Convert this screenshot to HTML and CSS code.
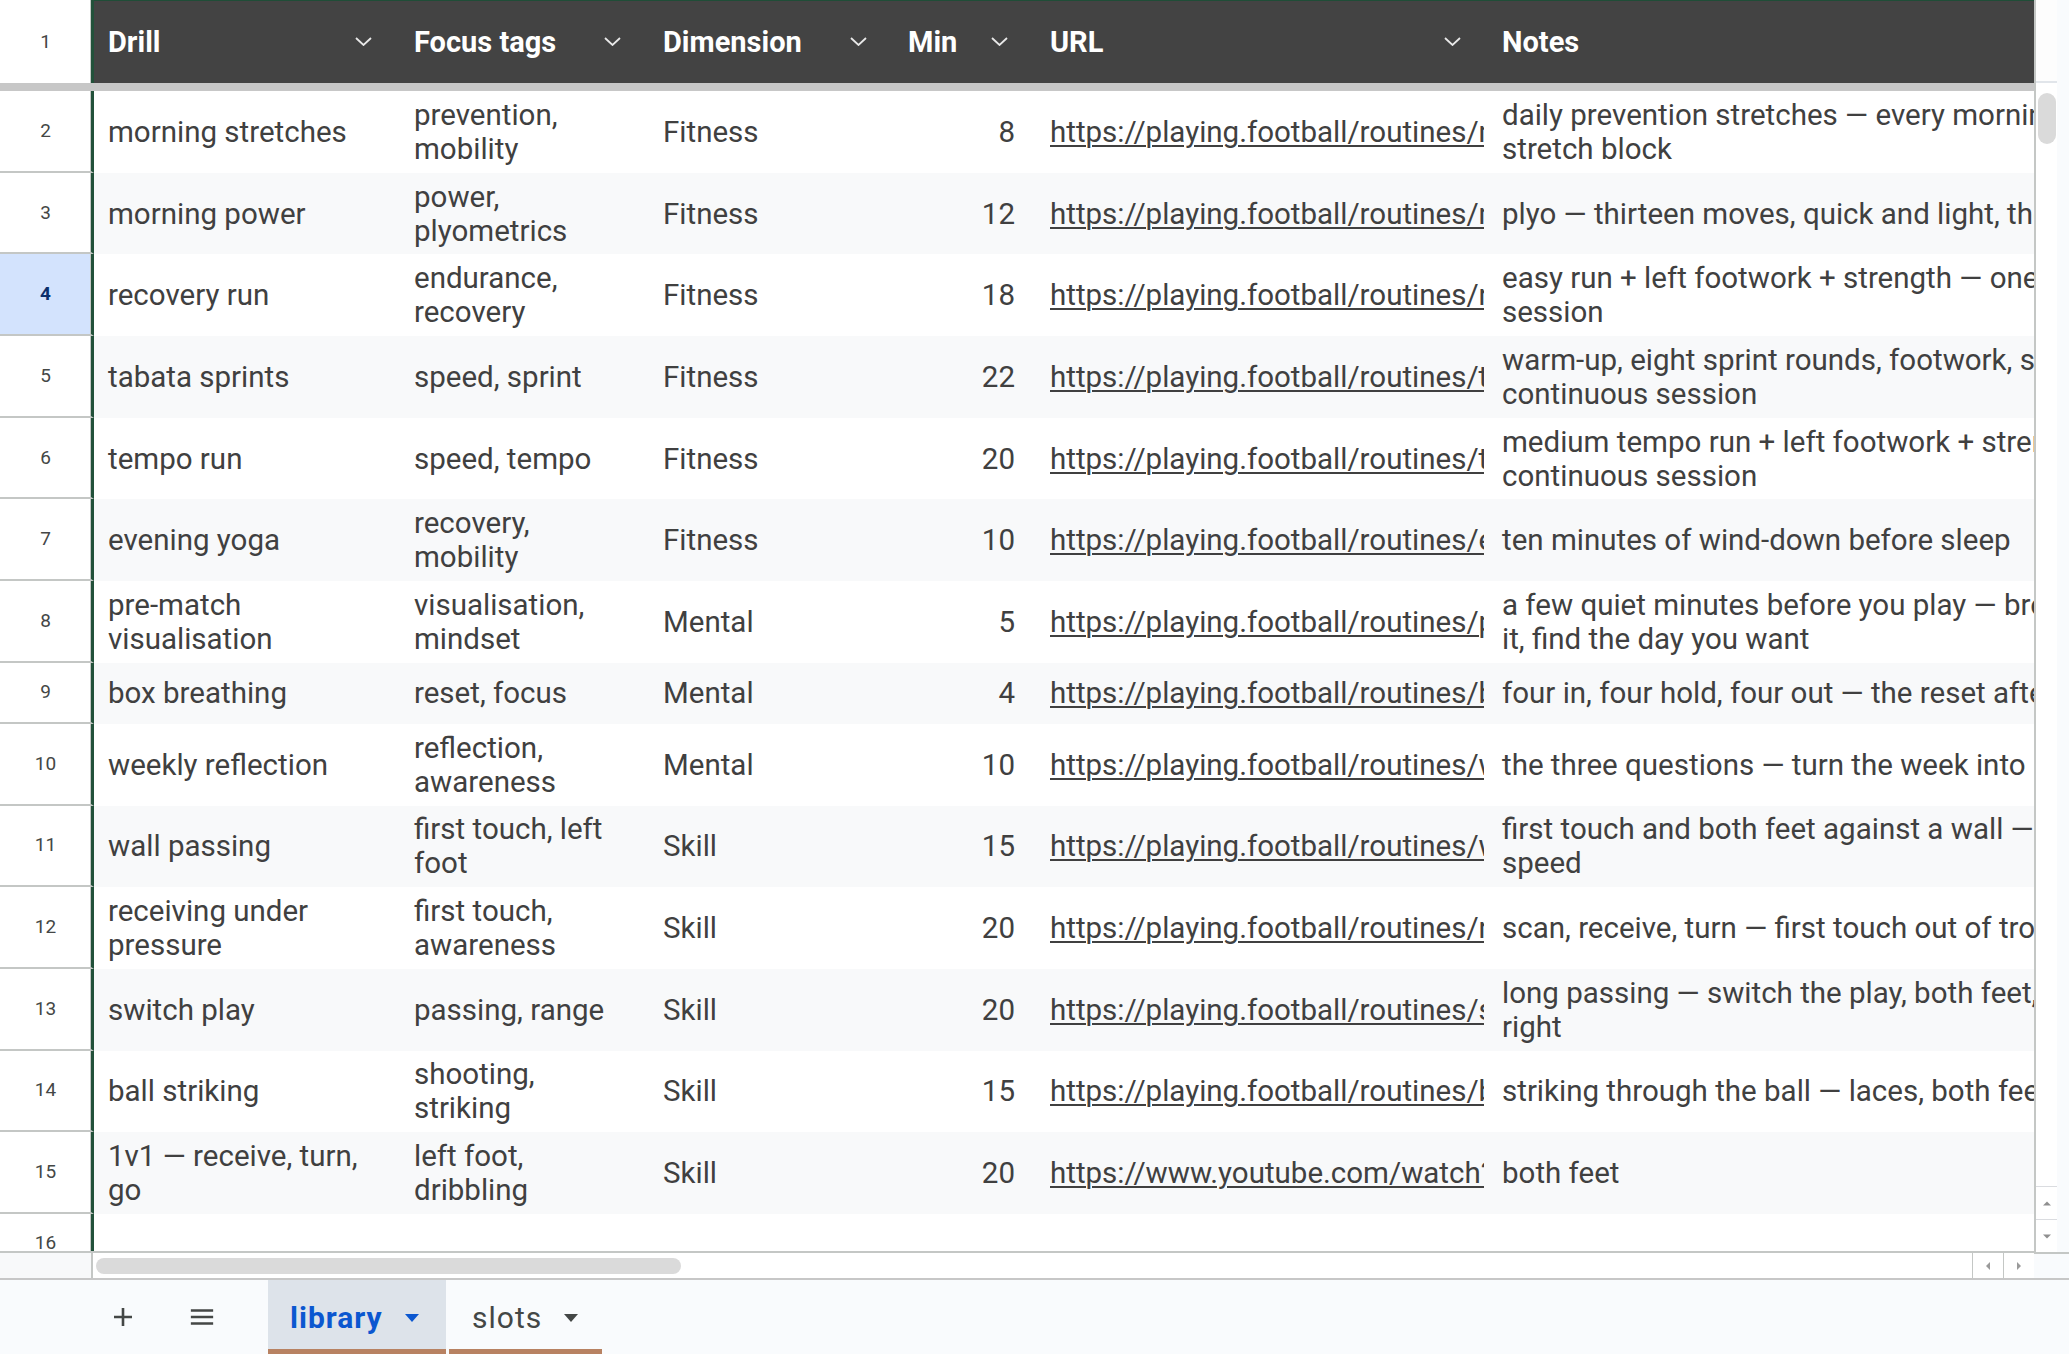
FILE: index.html
```html
<!DOCTYPE html>
<html lang="en">
<head>
    <meta charset="UTF-8">
    <meta name="viewport" content="width=device-width, initial-scale=1.0">
    <title>library</title>
    <link rel="stylesheet" href="styles.css">
</head>
<body>
<div class="sheet">
    <div class="grid">
        <div class="cells">
            <div class="row head">
                <div class="rn">1</div>
                <div class="h drill">Drill <svg class="chev" viewBox="0 0 17 9"><polyline points="1,1 8.5,8 16,1"/></svg></div>
                <div class="h tags">Focus tags <svg class="chev" viewBox="0 0 17 9"><polyline points="1,1 8.5,8 16,1"/></svg></div>
                <div class="h dim">Dimension <svg class="chev" viewBox="0 0 17 9"><polyline points="1,1 8.5,8 16,1"/></svg></div>
                <div class="h min">Min <svg class="chev" viewBox="0 0 17 9"><polyline points="1,1 8.5,8 16,1"/></svg></div>
                <div class="h url">URL <svg class="chev" viewBox="0 0 17 9"><polyline points="1,1 8.5,8 16,1"/></svg></div>
                <div class="h notes">Notes</div>
            </div>
            <div class="freeze"></div>

            <div class="row">
                <div class="rn">2</div>
                <div class="c drill">morning stretches</div>
                <div class="c tags">prevention,<br>mobility</div>
                <div class="c dim">Fitness</div>
                <div class="c min">8</div>
                <div class="c url"><a>https://playing.football/routines/morning-stretches</a></div>
                <div class="c notes">daily prevention stretches — every morning, before school<br>stretch block</div>
            </div>
            <div class="row odd">
                <div class="rn">3</div>
                <div class="c drill">morning power</div>
                <div class="c tags">power,<br>plyometrics</div>
                <div class="c dim">Fitness</div>
                <div class="c min">12</div>
                <div class="c url"><a>https://playing.football/routines/morning-power</a></div>
                <div class="c notes">plyo — thirteen moves, quick and light, then recover</div>
            </div>
            <div class="row">
                <div class="rn sel">4</div>
                <div class="c drill">recovery run</div>
                <div class="c tags">endurance,<br>recovery</div>
                <div class="c dim">Fitness</div>
                <div class="c min">18</div>
                <div class="c url"><a>https://playing.football/routines/recovery-run</a></div>
                <div class="c notes">easy run + left footwork + strength — one continuous<br>session</div>
            </div>
            <div class="row odd">
                <div class="rn">5</div>
                <div class="c drill">tabata sprints</div>
                <div class="c tags">speed, sprint</div>
                <div class="c dim">Fitness</div>
                <div class="c min">22</div>
                <div class="c url"><a>https://playing.football/routines/tabata-sprints</a></div>
                <div class="c notes">warm-up, eight sprint rounds, footwork, strength — one<br>continuous session</div>
            </div>
            <div class="row">
                <div class="rn">6</div>
                <div class="c drill">tempo run</div>
                <div class="c tags">speed, tempo</div>
                <div class="c dim">Fitness</div>
                <div class="c min">20</div>
                <div class="c url"><a>https://playing.football/routines/tempo-run</a></div>
                <div class="c notes">medium tempo run + left footwork + strength — one<br>continuous session</div>
            </div>
            <div class="row odd">
                <div class="rn">7</div>
                <div class="c drill">evening yoga</div>
                <div class="c tags">recovery,<br>mobility</div>
                <div class="c dim">Fitness</div>
                <div class="c min">10</div>
                <div class="c url"><a>https://playing.football/routines/evening-yoga</a></div>
                <div class="c notes">ten minutes of wind-down before sleep</div>
            </div>
            <div class="row">
                <div class="rn">8</div>
                <div class="c drill">pre-match<br>visualisation</div>
                <div class="c tags">visualisation,<br>mindset</div>
                <div class="c dim">Mental</div>
                <div class="c min">5</div>
                <div class="c url"><a>https://playing.football/routines/pre-match-visualisation</a></div>
                <div class="c notes">a few quiet minutes before you play — breathe, picture<br>it, find the day you want</div>
            </div>
            <div class="row odd short">
                <div class="rn">9</div>
                <div class="c drill">box breathing</div>
                <div class="c tags">reset, focus</div>
                <div class="c dim">Mental</div>
                <div class="c min">4</div>
                <div class="c url"><a>https://playing.football/routines/box-breathing</a></div>
                <div class="c notes">four in, four hold, four out — the reset after a mistake</div>
            </div>
            <div class="row">
                <div class="rn">10</div>
                <div class="c drill">weekly reflection</div>
                <div class="c tags">reflection,<br>awareness</div>
                <div class="c dim">Mental</div>
                <div class="c min">10</div>
                <div class="c url"><a>https://playing.football/routines/weekly-reflection</a></div>
                <div class="c notes">the three questions — turn the week into lessons</div>
            </div>
            <div class="row odd">
                <div class="rn">11</div>
                <div class="c drill">wall passing</div>
                <div class="c tags">first touch, left<br>foot</div>
                <div class="c dim">Skill</div>
                <div class="c min">15</div>
                <div class="c url"><a>https://playing.football/routines/wall-passing</a></div>
                <div class="c notes">first touch and both feet against a wall — build up<br>speed</div>
            </div>
            <div class="row">
                <div class="rn">12</div>
                <div class="c drill">receiving under<br>pressure</div>
                <div class="c tags">first touch,<br>awareness</div>
                <div class="c dim">Skill</div>
                <div class="c min">20</div>
                <div class="c url"><a>https://playing.football/routines/receiving-under-pressure</a></div>
                <div class="c notes">scan, receive, turn — first touch out of trouble</div>
            </div>
            <div class="row odd">
                <div class="rn">13</div>
                <div class="c drill">switch play</div>
                <div class="c tags">passing, range</div>
                <div class="c dim">Skill</div>
                <div class="c min">20</div>
                <div class="c url"><a>https://playing.football/routines/switch-play</a></div>
                <div class="c notes">long passing — switch the play, both feet, left and<br>right</div>
            </div>
            <div class="row">
                <div class="rn">14</div>
                <div class="c drill">ball striking</div>
                <div class="c tags">shooting,<br>striking</div>
                <div class="c dim">Skill</div>
                <div class="c min">15</div>
                <div class="c url"><a>https://playing.football/routines/ball-striking</a></div>
                <div class="c notes">striking through the ball — laces, both feet</div>
            </div>
            <div class="row odd">
                <div class="rn">15</div>
                <div class="c drill">1v1 — receive, turn,<br>go</div>
                <div class="c tags">left foot,<br>dribbling</div>
                <div class="c dim">Skill</div>
                <div class="c min">20</div>
                <div class="c url"><a>https://www.youtube.com/watch?v=1v1receive</a></div>
                <div class="c notes">both feet</div>
            </div>
            <div class="row short">
                <div class="rn">16</div>
                <div class="c drill"></div>
                <div class="c tags"></div>
                <div class="c dim"></div>
                <div class="c min"></div>
                <div class="c url"></div>
                <div class="c notes"></div>
            </div>
        </div>
        <div class="hscroll">
            <div class="hs-corner"></div>
            <div class="hs-track"><div class="hs-thumb"></div></div>
            <div class="hs-btn"><svg viewBox="0 0 6 10"><polygon points="5,1 1,5 5,9"/></svg></div>
            <div class="hs-btn"><svg viewBox="0 0 6 10"><polygon points="1,1 5,5 1,9"/></svg></div>
        </div>
    </div>
    <div class="vscroll">
        <div class="vs-track">
            <div class="vs-head"></div>
            <div class="vs-thumb"></div>
            <div class="vs-space"></div>
            <div class="vs-btn"><svg viewBox="0 0 10 6"><polygon points="1,5 5,1 9,5"/></svg></div>
            <div class="vs-btn"><svg viewBox="0 0 10 6"><polygon points="1,1 5,5 9,1"/></svg></div>
        </div>
        <div class="vs-foot"></div>
    </div>
</div>

<div class="tabbar">
    <div class="tb-icon">
        <svg viewBox="0 0 24 24"><path d="M12 3v18M3 12h18"/></svg>
    </div>
    <div class="tb-icon menu">
        <svg viewBox="0 0 28 24"><path d="M2 5h24M2 12h24M2 19h24"/></svg>
    </div>
    <div class="tab active">library <svg class="tri" viewBox="0 0 14 8"><polygon points="0,0 14,0 7,8"/></svg></div>
    <div class="tab">slots <svg class="tri" viewBox="0 0 14 8"><polygon points="0,0 14,0 7,8"/></svg></div>
</div>
</body>
</html>
```

FILE: styles.css
```css
body {
    margin: 0;
    width: 2069px;
    height: 1354px;
    overflow: hidden;
    background: #f9fbfd;
    font-family: Roboto, "Liberation Sans", Arial, sans-serif;
    color: #404040;
}

.sheet {
    display: flex;
    height: 1278px;
}

.grid {
    width: 2034px;
    display: flex;
    flex-direction: column;
}

.cells {
    height: 1251px;
    overflow: hidden;
    background: #fff;
    border-bottom: 2px solid #c4c7c5;
}

/* rows */
.row {
    display: grid;
    grid-template-columns: 94px 306px 246px 247px 145px 450px 546px;
    height: 81.7px;
    font-size: 29.5px;
    line-height: 34px;
}
.row.head {
    height: 83px;
}
.row.short {
    height: 61px;
}
.row.odd .c {
    background: #f8f9fa;
}

.freeze {
    height: 8px;
    background: #c7c7c7;
}

.rn {
    display: flex;
    align-items: center;
    justify-content: center;
    font-size: 19px;
    color: #444746;
    background: #fff;
    border-right: 3px solid #22513a;
    border-bottom: 2px solid #c4c7c5;
    box-shadow: inset -1px 0 #c4c7c5;
}
.head .rn {
    border-bottom: none;
}
.rn.sel {
    background: #d3e3fd;
    color: #0b2e6b;
    font-weight: 700;
}

/* header cells */
.h {
    display: flex;
    align-items: center;
    justify-content: space-between;
    background: #434343;
    color: #fff;
    font-size: 29px;
    font-weight: 700;
    box-shadow: inset 0 1px #1f4d37;
    white-space: nowrap;
}
.chev {
    width: 17px;
    height: 9px;
    fill: none;
    stroke: #e8e8e8;
    stroke-width: 1.8;
}

/* data cells */
.c {
    display: flex;
    align-items: center;
    overflow: hidden;
    white-space: nowrap;
}
.c a {
    display: block;
    overflow: hidden;
    color: #404040;
    text-decoration: underline;
    text-underline-offset: 3px;
    text-decoration-thickness: 2px;
}

.drill { padding-left: 14px; padding-right: 28px; }
.tags { padding-left: 14px; padding-right: 25px; }
.dim { padding-left: 17px; padding-right: 26px; }
.min { padding-left: 15px; padding-right: 30px; }
.url { padding-left: 12px; padding-right: 27px; }
.notes { padding-left: 14px; }

.c.min {
    justify-content: flex-end;
    padding-right: 23px;
}
.c.url {
    padding-right: 4px;
}

/* horizontal scroll bar */
.hscroll {
    display: flex;
    height: 25px;
    background: #fff;
}
.hs-corner {
    width: 91px;
    background: #f8f9fa;
    border-right: 2px solid #c4c7c5;
}
.hs-track {
    flex: 1;
    display: flex;
    align-items: center;
    padding-left: 3px;
}
.hs-thumb {
    width: 585px;
    height: 16px;
    border-radius: 8px;
    background: #dadada;
}
.hs-btn {
    width: 30px;
    display: flex;
    align-items: center;
    justify-content: center;
    border-left: 1px solid #c4c7c5;
}
.hs-btn svg {
    width: 6px;
    height: 10px;
    fill: #9a9a9a;
}

/* vertical scroll bar */
.vscroll {
    width: 35px;
    display: flex;
    flex-direction: column;
}
.vs-track {
    width: 23px;
    flex: 1;
    display: flex;
    flex-direction: column;
    background: #fff;
    border-left: 2px solid #c4c7c5;
    box-sizing: border-box;
}
.vs-head {
    height: 81px;
    border-bottom: 2px solid #e1e5ea;
    background: #fdfdfd;
}
.vs-thumb {
    margin: 10px 0 0 2px;
    width: 18px;
    height: 51px;
    border-radius: 9px;
    background: #dadada;
}
.vs-space {
    flex: 1;
}
.vs-btn {
    height: 32px;
    display: flex;
    align-items: center;
    justify-content: center;
    border-top: 1px solid #dadce0;
}
.vs-btn svg {
    width: 10px;
    height: 7px;
    fill: #8f8f8f;
}
.vs-foot {
    height: 24px;
    border-top: 2px solid #c4c7c5;
    background: #f9fbfd;
}

/* sheet tabs */
.tabbar {
    display: flex;
    height: 74px;
    border-top: 2px solid #c7c7c7;
    padding-left: 103px;
    font-size: 30px;
    letter-spacing: 1px;
}
.tb-icon {
    width: 40px;
    display: flex;
    align-items: center;
    justify-content: center;
    margin-right: 39px;
}
.tb-icon.menu {
    margin-right: 46px;
}
.tb-icon svg {
    width: 26px;
    height: 24px;
    fill: none;
    stroke: #444746;
    stroke-width: 2.6;
}
.tab {
    display: flex;
    align-items: center;
    gap: 22px;
    padding: 6px 0 0 23px;
    width: 153px;
    box-sizing: border-box;
    color: #444746;
    border-bottom: 5px solid #b88262;
    margin-right: 3px;
}
.tab.active {
    width: 178px;
    padding-left: 22px;
    background: #dde3ea;
    color: #0b57d0;
    font-weight: 700;
}
.tri {
    width: 14px;
    height: 8px;
    fill: #444746;
}
.tab.active .tri {
    fill: #0b57d0;
}
```
